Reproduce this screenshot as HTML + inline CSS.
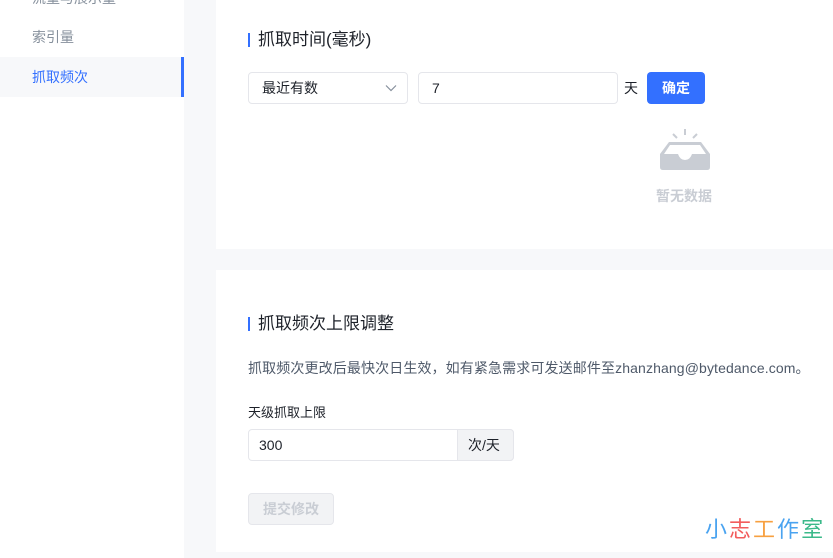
<!DOCTYPE html>
<html><head><meta charset="utf-8"><style>
*{margin:0;padding:0;box-sizing:border-box}
body{width:833px;height:558px;overflow:hidden;background:#f7f8fa;font-family:"Liberation Sans","Noto Sans CJK SC",sans-serif;position:relative;color:#1d2129}
.side{position:absolute;left:0;top:0;width:184px;height:558px;background:#fff}
.item{position:absolute;left:0;width:184px;height:40px;line-height:40px;padding-left:32px;font-size:14px;color:#86909c}
.card{position:absolute;left:216px;width:617px;background:#fff}
.title{position:absolute;left:32px;font-size:17px;color:#1d2129;padding-left:10px;line-height:20px}
.title:before{content:"";position:absolute;left:0;top:3px;width:2px;height:14px;background:#3370ff}
.box{position:absolute;border:1px solid #e5e6eb;border-radius:4px;background:#fff;font-size:14px;line-height:30px;padding-left:13px}
</style></head><body>
<div class="side">
<div class="item" style="top:-22px">流量与展示量</div>
<div class="item" style="top:17px">索引量</div>
<div class="item" style="top:57px;background:#f7f8fa;color:#3370ff">抓取频次</div>
<div style="position:absolute;left:181px;top:57px;width:3px;height:40px;background:#3370ff"></div>
</div>
<div class="card" style="top:0;height:249px">
<div class="title" style="top:30px">抓取时间(毫秒)</div>
<div class="box" style="left:32px;top:72px;width:160px;height:32px">最近有数
<svg style="position:absolute;right:10px;top:11px" width="12" height="8"><path d="M1 1.5L6 6.5L11 1.5" stroke="#86909c" fill="none" stroke-width="1.2"/></svg></div>
<div class="box" style="left:202px;top:72px;width:200px;height:32px">7</div>
<div style="position:absolute;left:408px;top:72px;line-height:32px;font-size:14px">天</div>
<div style="position:absolute;left:431px;top:72px;width:58px;height:32px;background:#3370ff;border-radius:4px;color:#fff;font-size:14px;font-weight:bold;text-align:center;line-height:32px">确定</div>
<svg style="position:absolute;left:443px;top:126px" width="52" height="46"><path d="M14 8L18 12M26 3V9M38 8L34 12" stroke="#c9cdd4" stroke-width="2"/><path d="M10 16H42L51 28V41Q51 44 48 44H4Q1 44 1 41V28Z" fill="#c9cdd4"/><path d="M11 19H41L47 28H33Q31 34 26 34Q21 34 19 28H5Z" fill="#fff"/></svg>
<div style="position:absolute;left:440px;top:186px;font-size:14px;color:#c9cdd4;font-weight:bold">暂无数据</div>
</div>
<div class="card" style="top:270px;height:282px">
<div class="title" style="top:44px">抓取频次上限调整</div>
<div style="position:absolute;left:32px;top:88px;font-size:14px;color:#4e5969;letter-spacing:0.12px;white-space:nowrap">抓取频次更改后最快次日生效，如有紧急需求可发送邮件至zhanzhang@bytedance.com。</div>
<div style="position:absolute;left:32px;top:132px;font-size:13px">天级抓取上限</div>
<div class="box" style="left:32px;top:159px;width:266px;height:32px;padding-left:10px">300</div>
<div class="box" style="left:241px;top:159px;width:57px;height:32px;background:#f2f3f5;padding-left:10px;border-radius:0 4px 4px 0">次/天</div>
<div style="position:absolute;left:32px;top:223px;width:86px;height:32px;background:#f2f3f5;border:1px solid #e5e6eb;border-radius:4px;color:#c9cdd4;font-size:14px;font-weight:bold;text-align:center;line-height:30px">提交修改</div>
</div>
<div style="position:absolute;left:705px;top:514px;font-size:22px;letter-spacing:2px;line-height:32px"><span style="color:#4aa3f0">小</span><span style="color:#f25c5c">志</span><span style="color:#f7a040">工</span><span style="color:#4aa3f0">作</span><span style="color:#3bb98a">室</span></div>
</body></html>
